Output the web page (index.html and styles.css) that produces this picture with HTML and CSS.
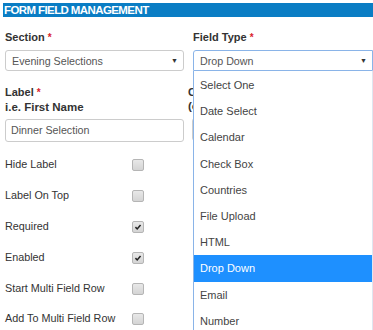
FILE: index.html
```html
<!DOCTYPE html>
<html>
<head>
<meta charset="utf-8">
<link rel="stylesheet" href="styles.css">
</head>
<body>
<div class="page">
  <div class="header">FORM FIELD MANAGEMENT</div>
  <div class="cols">
    <div class="col">
      <div class="field-label">Section <span class="req">*</span></div>
      <div class="select">
        <span>Evening Selections</span>
        <span class="arrow">&#9660;</span>
      </div>
      <div class="label2"><span class="field-label">Label <span class="req">*</span></span><br><span class="hint">i.e. First Name</span></div>
      <div class="input">Dinner Selection</div>
      <div class="checks">
        <div class="check-row"><span class="check-text">Hide Label</span><span class="cb"></span></div>
        <div class="check-row"><span class="check-text">Label On Top</span><span class="cb"></span></div>
        <div class="check-row"><span class="check-text">Required</span><span class="cb checked"><svg viewBox="0 0 10 10" width="8" height="8"><path d="M1.8 5.2 L4 7.4 L8.2 2.4" fill="none" stroke="#222" stroke-width="1.9"/></svg></span></div>
        <div class="check-row"><span class="check-text">Enabled</span><span class="cb checked"><svg viewBox="0 0 10 10" width="8" height="8"><path d="M1.8 5.2 L4 7.4 L8.2 2.4" fill="none" stroke="#222" stroke-width="1.9"/></svg></span></div>
        <div class="check-row"><span class="check-text">Start Multi Field Row</span><span class="cb"></span></div>
        <div class="check-row"><span class="check-text">Add To Multi Field Row</span><span class="cb"></span></div>
      </div>
    </div>
    <div class="col">
      <div class="field-label">Field Type <span class="req">*</span></div>
      <div class="select-wrap">
        <div class="select focused">
          <span>Drop Down</span>
          <span class="arrow">&#9660;</span>
        </div>
        <ul class="menu">
          <li>Select One</li>
          <li>Date Select</li>
          <li>Calendar</li>
          <li>Check Box</li>
          <li>Countries</li>
          <li>File Upload</li>
          <li>HTML</li>
          <li class="active">Drop Down</li>
          <li>Email</li>
          <li>Number</li>
        </ul>
      </div>
      <div class="label2 hidden-side"><span class="field-label">Column Class</span><br><span class="hint">(optional)</span></div>
      <div class="input side-input"></div>
    </div>
  </div>
</div>
</body>
</html>
```
FILE: styles.css
```css
html, body {
  margin: 0;
  padding: 0;
  background: #fff;
}
body {
  font-family: "Liberation Sans", Arial, sans-serif;
  color: #333;
  font-size: 10.5px;
}
.page {
  padding-top: 3px;
}
.header {
  margin-left: 3px;
  height: 14px;
  line-height: 14px;
  background: #0a7dc4;
  color: #fff;
  font-weight: bold;
  font-size: 11.5px;
  padding-left: 1px;
  letter-spacing: -0.6px;
}
.cols {
  display: grid;
  grid-template-columns: 179px 180px;
  column-gap: 9px;
  padding-left: 5px;
  margin-top: 13px;
}
.col {
  display: flex;
  flex-direction: column;
  min-width: 0;
}
.field-label {
  font-weight: bold;
  font-size: 11px;
  line-height: 14px;
  color: #333;
  height: 20px;
}
.label2 .field-label {
  height: auto;
}
.hint {
  font-weight: bold;
  font-size: 11.5px;
  color: #333;
}
.req {
  color: #d9232d;
  font-size: 10px;
}
.select {
  height: 21px;
  box-sizing: border-box;
  border: 1px solid #ccc;
  border-radius: 3px;
  display: flex;
  align-items: center;
  justify-content: space-between;
  padding: 0 5px 0 6px;
  color: #555;
  font-size: 10.7px;
}
.select .arrow {
  font-size: 7px;
  color: #333;
}
.select.focused {
  border-color: #8ab4e8;
  border-radius: 3px 0 0 0;
}
.label2 {
  margin-top: 14px;
  line-height: 14px;
  margin-bottom: 5px;
}
.input {
  height: 23px;
  box-sizing: border-box;
  border: 1px solid #ccc;
  border-radius: 3px;
  padding: 0 5px;
  line-height: 21px;
  color: #555;
  font-size: 10.7px;
}
.hidden-side {
  margin-left: -5px;
}
.side-input {
  margin-left: -1px;
}
.checks {
  display: flex;
  flex-direction: column;
  margin-top: 7px;
}
.check-row {
  display: flex;
  align-items: center;
  height: 30.8px;
}
.check-text {
  width: 127px;
  font-size: 10.8px;
  color: #333;
}
.cb {
  width: 10px;
  height: 10px;
  border: 1px solid #b5b5b5;
  border-radius: 2px;
  background: linear-gradient(#e8e8e8, #d4d4d4);
  display: flex;
  align-items: center;
  justify-content: center;
  margin-top: 2px;
}
.select-wrap {
  position: relative;
}
.menu {
  position: absolute;
  top: 100%;
  left: 0;
  right: 0;
  margin: 0;
  padding: 1px 0 0;
  list-style: none;
  background: #fff;
  border-left: 1px solid #8ab4e8;
  border-right: 1px solid #dfe6f0;
  z-index: 2;
}
.menu li {
  height: 26.2px;
  line-height: 26.2px;
  padding-left: 6px;
  color: #444;
  font-size: 11px;
}
.menu li.active {
  background: #1e90ff;
  color: #fff;
}
```
